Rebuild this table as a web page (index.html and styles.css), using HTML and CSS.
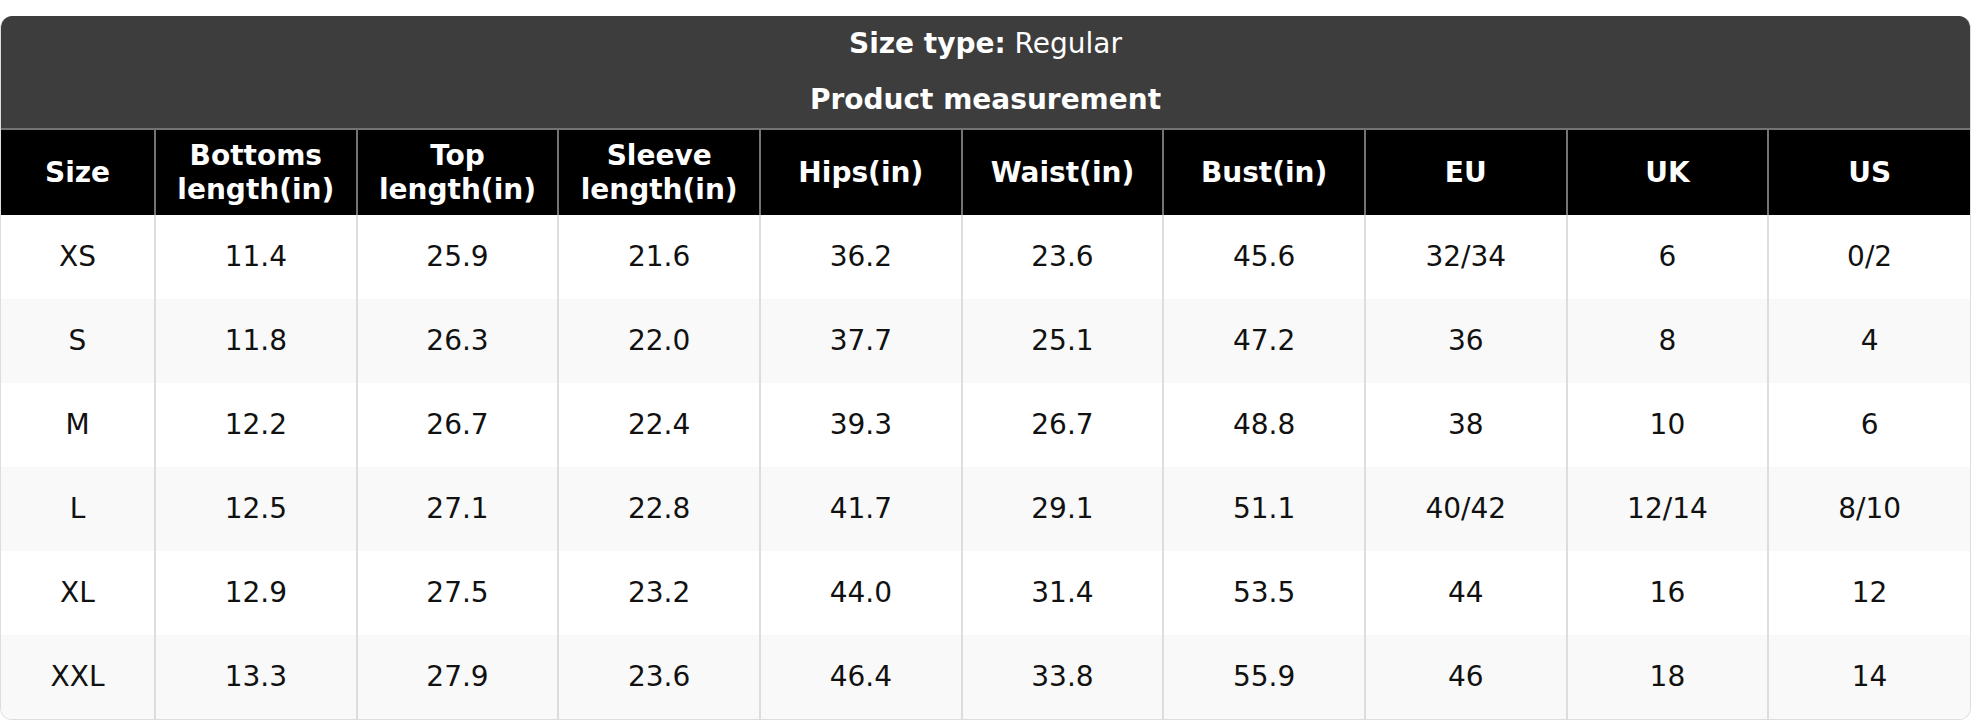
FILE: index.html
```html
<!DOCTYPE html>
<html lang="en">
<head>
<meta charset="utf-8">
<title>Size chart</title>
<link rel="stylesheet" href="styles.css">
</head>
<body>
<div class="card">
  <div class="banner">
    <div class="banner-line"><b>Size type:</b> Regular</div>
    <div class="banner-line banner-title">Product measurement</div>
  </div>
  <table class="chart">
    <colgroup>
      <col class="col-size">
      <col><col><col><col><col><col><col><col><col>
    </colgroup>
    <thead>
      <tr>
        <th>Size</th>
        <th>Bottoms<br>length(in)</th>
        <th>Top<br>length(in)</th>
        <th>Sleeve<br>length(in)</th>
        <th>Hips(in)</th>
        <th>Waist(in)</th>
        <th>Bust(in)</th>
        <th>EU</th>
        <th>UK</th>
        <th>US</th>
      </tr>
    </thead>
    <tbody>
      <tr><td>XS</td><td>11.4</td><td>25.9</td><td>21.6</td><td>36.2</td><td>23.6</td><td>45.6</td><td>32/34</td><td>6</td><td>0/2</td></tr>
      <tr><td>S</td><td>11.8</td><td>26.3</td><td>22.0</td><td>37.7</td><td>25.1</td><td>47.2</td><td>36</td><td>8</td><td>4</td></tr>
      <tr><td>M</td><td>12.2</td><td>26.7</td><td>22.4</td><td>39.3</td><td>26.7</td><td>48.8</td><td>38</td><td>10</td><td>6</td></tr>
      <tr><td>L</td><td>12.5</td><td>27.1</td><td>22.8</td><td>41.7</td><td>29.1</td><td>51.1</td><td>40/42</td><td>12/14</td><td>8/10</td></tr>
      <tr><td>XL</td><td>12.9</td><td>27.5</td><td>23.2</td><td>44.0</td><td>31.4</td><td>53.5</td><td>44</td><td>16</td><td>12</td></tr>
      <tr><td>XXL</td><td>13.3</td><td>27.9</td><td>23.6</td><td>46.4</td><td>33.8</td><td>55.9</td><td>46</td><td>18</td><td>14</td></tr>
    </tbody>
  </table>
</div>
</body>
</html>
```

FILE: styles.css
```css
html, body {
  margin: 0;
  padding: 0;
  background: #ffffff;
}

body {
  padding-top: 16px;
  font-family: "DejaVu Sans", "Liberation Sans", sans-serif;
  font-size: 28px;
  line-height: 1.2;
  color: #111111;
}

.card {
  width: 1971px;
  box-sizing: border-box;
  border: 1px solid #dddddd;
  border-top: none;
  border-radius: 12px;
  overflow: hidden;
}

.banner {
  background: #3d3d3d;
  color: #ffffff;
  text-align: center;
}

.banner-line {
  padding: 11px 0;
  height: 34px;
}

.banner-line b,
.banner-title {
  font-weight: bold;
}

.chart {
  width: 100%;
  border-collapse: collapse;
  table-layout: fixed;
}

.col-size {
  width: 154px;
}

.chart th {
  background: #000000;
  color: #ffffff;
  font-weight: bold;
  padding: 9px 4px;
  height: 67px;
  border: 2px solid #737373;
  border-bottom: none;
  text-align: center;
  vertical-align: middle;
}

.chart th:first-child {
  border-left: none;
}

.chart th:last-child {
  border-right: none;
}

.chart td {
  padding: 25px 4px;
  height: 34px;
  text-align: center;
  vertical-align: middle;
  border-left: 2px solid #dddddd;
  border-right: 2px solid #dddddd;
}

.chart td:first-child {
  border-left: none;
}

.chart td:last-child {
  border-right: none;
}

.chart tbody tr:nth-child(even) td {
  background: #f9f9f9;
}
```
